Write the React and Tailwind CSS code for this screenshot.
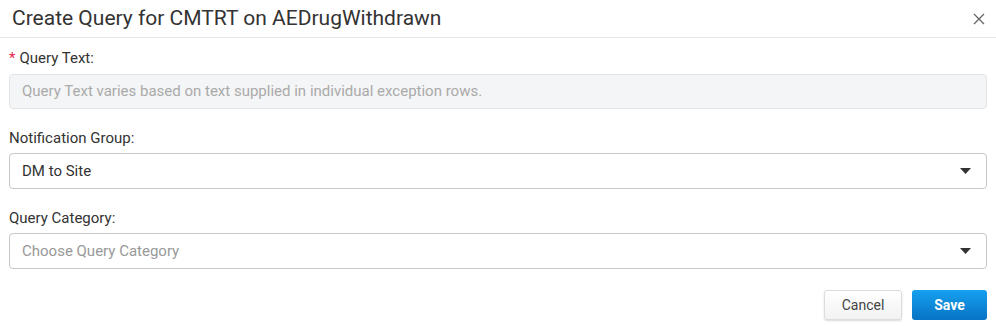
import React from 'react';

function Caret() {
  return (
    <svg width="11" height="6" viewBox="0 0 11 6" className="shrink-0">
      <path d="M0 0 L11 0 L5.5 6 Z" fill="#333" />
    </svg>
  );
}

function SelectBox({ value, placeholder }) {
  return (
    <div className="flex items-center h-[36px] border border-[#c8c8c8] rounded-[4px] bg-white pl-[12px] pr-[15px]">
      <span className={`flex-1 text-[15px] ${value ? 'text-[#333]' : 'text-[#999]'}`}>
        {value || placeholder}
      </span>
      <Caret />
    </div>
  );
}

export default function App() {
  return (
    <div className="w-[996px] h-[326px] bg-white" style={{ fontFamily: 'Roboto, "Liberation Sans", sans-serif' }}>
      {/* Header */}
      <div className="flex items-center justify-between h-[38px] border-b border-[#e6e6e6] pl-[12px] pr-[11px]">
        <h1 className="text-[21px] text-[#333] font-normal leading-none">
          Create Query for CMTRT on AEDrugWithdrawn
        </h1>
        <svg width="12" height="12" viewBox="0 0 12 12" className="mt-[1px]">
          <path d="M1 1 L11 11 M11 1 L1 11" stroke="#666" strokeWidth="1.3" />
        </svg>
      </div>

      {/* Body */}
      <div className="px-[9px]">
        <div className="pt-[9px]">
          <label className="block text-[15px] text-[#333] h-[22px] leading-[22px]">
            <span className="text-[#e0284f] mr-[4px]">*</span>Query Text:
          </label>
          <div className="mt-[5px] h-[35px] flex items-center border border-[#e2e4e6] rounded-[4px] bg-[#f4f5f6] px-[12px] text-[15px] text-[#aaa]">
            Query Text varies based on text supplied in individual exception rows.
          </div>
        </div>

        <div className="pt-[18px]">
          <label className="block text-[15px] text-[#333] h-[22px] leading-[22px]">Notification Group:</label>
          <div className="mt-[4px]">
            <SelectBox value="DM to Site" />
          </div>
        </div>

        <div className="pt-[18px]">
          <label className="block text-[15px] text-[#333] h-[22px] leading-[22px]">Query Category:</label>
          <div className="mt-[4px]">
            <SelectBox placeholder="Choose Query Category" />
          </div>
        </div>

        <div className="flex justify-end gap-[10px] pt-[21px]">
          <button className="h-[30px] w-[78px] rounded-[3px] border border-[#dcdcdc] bg-gradient-to-b from-white to-[#f2f2f2] shadow-[0_1px_2px_rgba(0,0,0,0.15)] text-[14px] text-[#444]">
            Cancel
          </button>
          <button className="h-[30px] w-[75px] rounded-[3px] bg-gradient-to-b from-[#16a0ef] to-[#0873c4] text-[14px] font-bold text-white">
            Save
          </button>
        </div>
      </div>
    </div>
  );
}
